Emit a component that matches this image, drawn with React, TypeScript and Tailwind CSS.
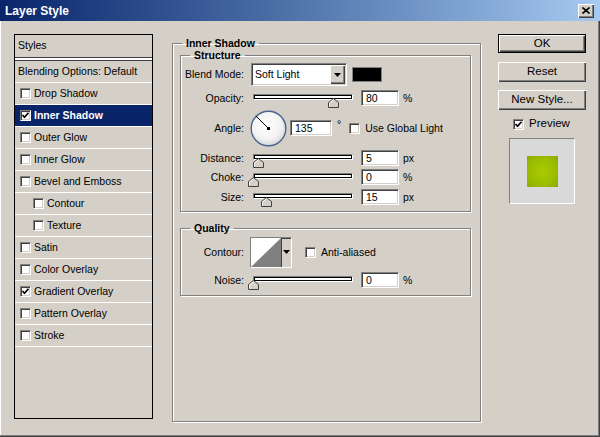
import React from "react";

const raised =
  "bg-[#d4d0c8] shadow-[inset_1px_1px_0_#ffffff,inset_-1px_-1px_0_#404040,inset_-2px_-2px_0_#808080]";
const sunken =
  "border border-t-[#808080] border-l-[#808080] border-r-white border-b-white shadow-[inset_1px_1px_0_#404040,inset_-1px_-1px_0_#d4d0c8]";

const CheckMark = () => (
  <svg width="9" height="9" viewBox="0 0 9 9" className="absolute left-[0px] top-[0px]">
    <path d="M1.5 4 L3.5 6.3 L7.5 1.8" fill="none" stroke="#000" strokeWidth="1.7" />
  </svg>
);

const Checkbox = ({ checked = false }: { checked?: boolean }) => (
  <div className={`relative w-[11px] h-[11px] shrink-0 bg-white ${sunken}`}>
    {checked && <CheckMark />}
  </div>
);

const Thumb = () => (
  <svg width="11" height="10" viewBox="0 0 11 10">
    <path d="M5.5 0.5 L10.5 4.5 V9.5 H0.5 V4.5 Z" fill="#d4d0c8" stroke="#404040" />
    <path d="M1.5 8.5 V5 L5.5 1.8" fill="none" stroke="#ffffff" />
  </svg>
);

const Slider = ({ pos }: { pos: number }) => (
  <div className="relative w-[106px] h-[16px] shrink-0">
    <div className="mt-[7px] mx-[3px] h-[6px] border border-t-[#808080] border-l-[#808080] border-r-white border-b-white bg-white shadow-[inset_0_0_0_1px_#000]" />
    <div className="absolute top-[4px]" style={{ left: 3 + pos - 5.5 }}>
      <Thumb />
    </div>
  </div>
);

const NumInput = ({ value, w = "w-[38px]" }: { value: string; w?: string }) => (
  <div className={`${w} h-[16px] shrink-0 bg-white ${sunken} flex items-center pl-[4px] text-[10.5px] leading-none`}>
    {value}
  </div>
);

const Label = ({ children }: { children: React.ReactNode }) => (
  <div className="w-[63px] shrink-0 text-right text-[10.5px] leading-none">{children}</div>
);

const DownArrow = () => (
  <svg width="7" height="4" viewBox="0 0 7 4">
    <path d="M0 0 H7 L3.5 4 Z" fill="#000" />
  </svg>
);

const Group = ({
  title,
  className = "",
  children,
}: {
  title: string;
  className?: string;
  children: React.ReactNode;
}) => (
  <fieldset
    className={`border border-[#808080] shadow-[inset_1px_1px_0_#ffffff,1px_1px_0_#ffffff] ${className}`}
  >
    <legend className="ml-[9px] px-[4px] text-[10.5px] font-bold leading-[12px]">{title}</legend>
    {children}
  </fieldset>
);

const Dial = () => (
  <svg width="37" height="37" viewBox="0 0 37 37" className="shrink-0">
    <defs>
      <radialGradient id="dialFill" cx="45%" cy="40%" r="60%">
        <stop offset="0%" stopColor="#ffffff" />
        <stop offset="70%" stopColor="#f2f2f2" />
        <stop offset="100%" stopColor="#d6d6d6" />
      </radialGradient>
    </defs>
    <circle cx="18.5" cy="18.5" r="17.3" fill="url(#dialFill)" stroke="#4b6292" strokeWidth="1.4" />
    <line x1="18.5" y1="18.5" x2="5.8" y2="5.8" stroke="#000" strokeWidth="1" />
    <rect x="17" y="17" width="3" height="3" fill="#000" />
  </svg>
);

const Button = ({ label, isDefault = false }: { label: string; isDefault?: boolean }) => (
  <div
    className={`w-[88px] ${isDefault ? "h-[19px] border border-black" : "h-[20px]"} ${raised} flex items-center justify-center text-[11.5px] leading-none`}
  >
    {label}
  </div>
);

const styleItems: { label: string; checked: boolean; indent?: boolean }[] = [
  { label: "Drop Shadow", checked: false },
  { label: "Inner Shadow", checked: true },
  { label: "Outer Glow", checked: false },
  { label: "Inner Glow", checked: false },
  { label: "Bevel and Emboss", checked: false },
  { label: "Contour", checked: false, indent: true },
  { label: "Texture", checked: false, indent: true },
  { label: "Satin", checked: false },
  { label: "Color Overlay", checked: false },
  { label: "Gradient Overlay", checked: true },
  { label: "Pattern Overlay", checked: false },
  { label: "Stroke", checked: false },
];

export default function App() {
  return (
    <div className="w-[600px] h-[437px] overflow-hidden bg-[#d4d0c8] text-black font-['Liberation_Sans',Arial,sans-serif] shadow-[inset_-1px_-1px_0_#404040,inset_-2px_-2px_0_#808080,inset_1px_0_0_#ffffff]">
      {/* title bar */}
      <div className="h-[21px] bg-linear-to-r from-[#0a246a] to-[#a6caf0] flex items-center pl-[5px] pr-[6px]">
        <span className="text-white font-bold text-[12px] leading-none">Layer Style</span>
        <div className={`ml-auto w-[16px] h-[14px] ${raised} flex items-center justify-center`}>
          <svg width="8" height="7" viewBox="0 0 8 7">
            <path d="M0.5 0.5 L7.5 6.5 M7.5 0.5 L0.5 6.5" stroke="#000" strokeWidth="1.6" />
          </svg>
        </div>
      </div>

      <div className="flex pl-[14px] pt-[13px]">
        {/* styles list */}
        <div className="w-[139px] h-[385px] border border-black flex flex-col text-[10.5px]">
          <div className="h-[22px] flex items-center pl-[3px]">Styles</div>
          <div className="h-[4px] border-y border-[#404040] bg-white" />
          <div className="h-[22px] flex items-center pl-[3px] border-b border-white">
            Blending Options: Default
          </div>
          {styleItems.map((item) => {
            const selected = item.label === "Inner Shadow";
            return (
              <div
                key={item.label}
                className={`h-[22px] flex items-center gap-[3px] border-b border-white ${
                  item.indent ? "pl-[18px]" : "pl-[5px]"
                } ${selected ? "bg-[#0a246a] text-white font-bold" : ""}`}
              >
                <Checkbox checked={item.checked} />
                <span className="leading-none">{item.label}</span>
              </div>
            );
          })}
        </div>

        {/* main settings */}
        <div className="ml-[19px] mt-[3px]">
          <Group title="Inner Shadow" className="w-[309px] h-[385px]">
            <Group title="Structure" className="ml-[7px] w-[291px] pb-[6px]">
              <div className="flex items-center h-[23px] mt-[2px]">
                <Label>Blend Mode:</Label>
                <div className={`ml-[7px] w-[96px] h-[23px] bg-white ${sunken} flex items-center`}>
                  <span className="pl-[3px] text-[10.5px] leading-none">Soft Light</span>
                  <div className={`ml-auto mr-[1px] w-[15px] h-[19px] ${raised} flex items-center justify-center`}>
                    <DownArrow />
                  </div>
                </div>
                <div className="ml-[5px] w-[30px] h-[15px] bg-black border border-[#808080]" />
              </div>

              <div className="flex items-center h-[16px] mt-[4px]">
                <Label>Opacity:</Label>
                <div className="ml-[6px]">
                  <Slider pos={80} />
                </div>
                <div className="ml-[5px]">
                  <NumInput value="80" />
                </div>
                <span className="ml-[4px] text-[10.5px] leading-none">%</span>
              </div>

              <div className="flex items-center h-[38px] mt-[3px]">
                <Label>Angle:</Label>
                <div className="ml-[6px]">
                  <Dial />
                </div>
                <div className="ml-[3px]">
                  <NumInput value="135" w="w-[42px]" />
                </div>
                <span className="ml-[5px] self-start mt-[10px] text-[10.5px] leading-none">°</span>
                <div className="ml-[8px]">
                  <Checkbox />
                </div>
                <span className="ml-[5px] text-[10.5px] leading-none">Use Global Light</span>
              </div>

              <div className="flex items-center h-[16px] mt-[3px]">
                <Label>Distance:</Label>
                <div className="ml-[6px]">
                  <Slider pos={5} />
                </div>
                <div className="ml-[5px]">
                  <NumInput value="5" />
                </div>
                <span className="ml-[4px] text-[10.5px] leading-none">px</span>
              </div>

              <div className="flex items-center h-[16px] mt-[3px]">
                <Label>Choke:</Label>
                <div className="ml-[6px]">
                  <Slider pos={0} />
                </div>
                <div className="ml-[5px]">
                  <NumInput value="0" />
                </div>
                <span className="ml-[4px] text-[10.5px] leading-none">%</span>
              </div>

              <div className="flex items-center h-[16px] mt-[4px]">
                <Label>Size:</Label>
                <div className="ml-[6px]">
                  <Slider pos={13} />
                </div>
                <div className="ml-[5px]">
                  <NumInput value="15" />
                </div>
                <span className="ml-[4px] text-[10.5px] leading-none">px</span>
              </div>
            </Group>

            <Group title="Quality" className="ml-[7px] mt-[10px] w-[291px] pb-[7px]">
              <div className="flex items-center h-[31px] mt-[3px]">
                <Label>Contour:</Label>
                <div className={`ml-[6px] w-[42px] h-[31px] ${sunken} flex`}>
                  <svg width="30" height="29" viewBox="0 0 30 29" className="shrink-0">
                    <rect width="30" height="29" fill="#ffffff" />
                    <path d="M0 29 L30 0 V29 Z" fill="#808080" />
                  </svg>
                  <div className="flex-1 border-l border-[#404040] flex justify-center pt-[12px]">
                    <DownArrow />
                  </div>
                </div>
                <div className="ml-[13px]">
                  <Checkbox />
                </div>
                <span className="ml-[5px] text-[10.5px] leading-none">Anti-aliased</span>
              </div>

              <div className="flex items-center h-[16px] mt-[4px]">
                <Label>Noise:</Label>
                <div className="ml-[6px]">
                  <Slider pos={0} />
                </div>
                <div className="ml-[5px]">
                  <NumInput value="0" />
                </div>
                <span className="ml-[4px] text-[10.5px] leading-none">%</span>
              </div>
            </Group>
          </Group>
        </div>

        {/* right column */}
        <div className="ml-[17px] w-[88px] flex flex-col">
          <Button label="OK" isDefault />
          <div className="mt-[9px]">
            <Button label="Reset" />
          </div>
          <div className="mt-[8px]">
            <Button label="New Style..." />
          </div>
          <div className="mt-[8px] flex items-center h-[12px] pl-[15px] gap-[5px]">
            <Checkbox checked />
            <span className="text-[11.5px] leading-none">Preview</span>
          </div>
          <div className="mt-[8px] ml-[11px] w-[66px] h-[66px] bg-[#d9d9d9] border border-t-[#808080] border-l-[#808080] border-r-white border-b-white flex items-center justify-center">
            <div className="w-[31px] h-[31px] bg-[radial-gradient(circle,#a9cb00_0%,#9cbd00_60%,#8aaa00_100%)]" />
          </div>
        </div>
      </div>
    </div>
  );
}
